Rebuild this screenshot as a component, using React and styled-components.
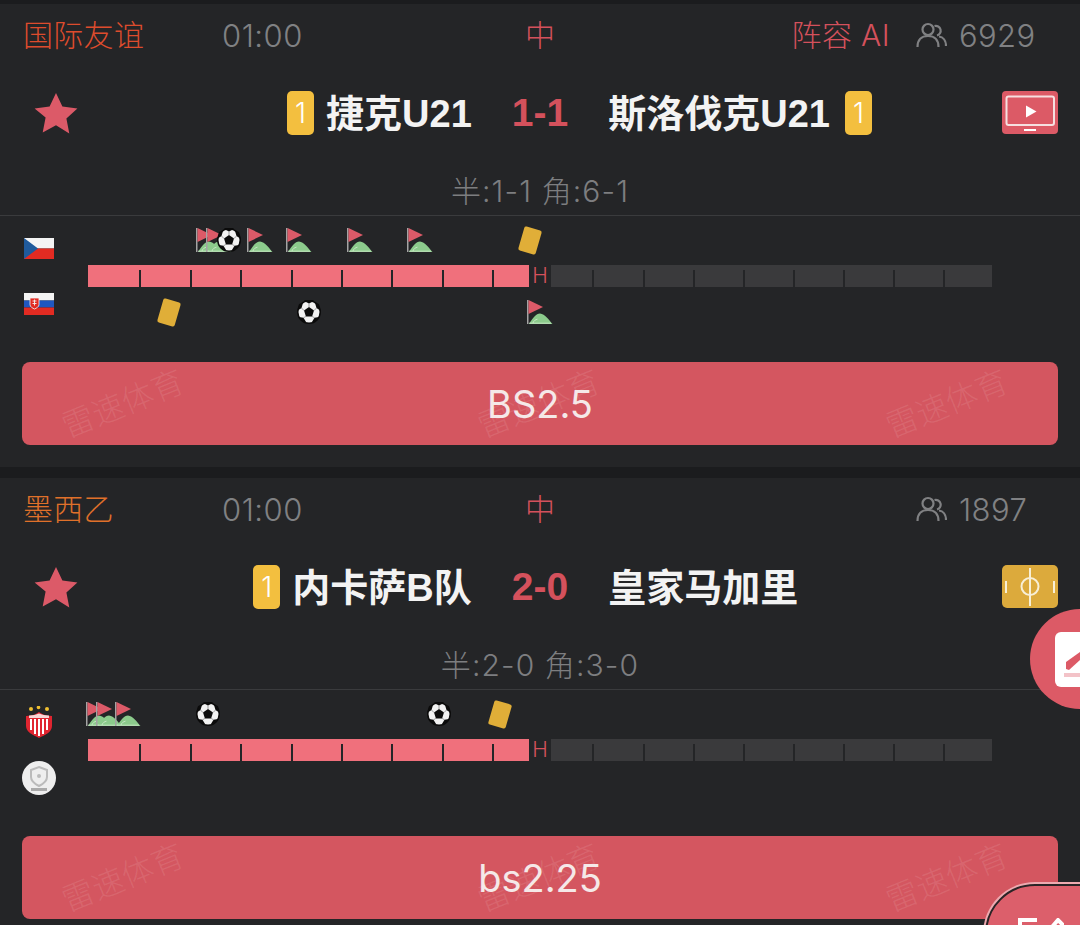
import React from 'react';
import styled, { createGlobalStyle } from 'styled-components';

const GlobalStyle = createGlobalStyle`
  html, body {
    margin: 0;
    height: 100%;
    overflow: hidden;
    background: #1b1c1e;
  }
  #root {
    height: 100%;
  }
`;

const FONT = `Inter, "Noto Sans CJK SC", sans-serif`;
const BOLD_FONT = `"Liberation Sans", "Noto Sans CJK SC", sans-serif`;

const Page = styled.div`
  position: relative;
  height: 925px;
  overflow: hidden;
  padding-top: 4px;
  box-sizing: border-box;
  display: flex;
  flex-direction: column;
  gap: 11px;
  font-family: ${FONT};
`;

const Card = styled.section`
  background: #242527;
  flex: none;
`;

const TopRow = styled.div`
  height: 64px;
  display: grid;
  grid-template-columns: 1fr auto 1fr;
  align-items: center;
  font-size: 30px;
  font-weight: 300;
  color: #808183;
`;

const TopLeft = styled.div`
  display: flex;
  align-items: center;
  padding-left: 23px;
`;

const League = styled.span`
  width: 199px;
  margin-top: -6px;
  letter-spacing: 0.3px;
  color: ${(p) => p.$color};
`;

const Time = styled.span`
  margin-top: -2px;
  font-size: 31px;
  letter-spacing: 0.5px;
`;

const Status = styled.span`
  margin-top: -6px;
  color: #d4515c;
`;

const TopRight = styled.div`
  display: flex;
  align-items: center;
  justify-content: flex-end;
`;

const Lineup = styled.span`
  margin: -6px 26px 0 0;
  letter-spacing: 0.4px;
  color: #d4515c;
`;

const Viewers = styled.div`
  width: 164px;
  margin-top: -2px;
  display: flex;
  align-items: center;
  gap: 12px;
  font-size: 31px;
  letter-spacing: 0.4px;
`;

const TeamRow = styled.div`
  height: 90px;
  padding: 0 22px;
  display: grid;
  grid-template-columns: 1fr auto 1fr;
  column-gap: 40px;
  align-items: center;
`;

const Side = styled.div`
  display: flex;
  align-items: center;
`;

const StarSlot = styled.div`
  margin: 0 auto 0 12px;
  display: flex;
`;

const IconSlot = styled.div`
  margin-left: auto;
  display: flex;
`;

const TeamName = styled.span`
  margin-top: -6px;
  font-family: ${BOLD_FONT};
  font-size: 38px;
  font-weight: 700;
  color: #f3f3f3;
  white-space: nowrap;
`;

const RedCount = styled.span`
  width: 27px;
  height: 44px;
  border-radius: 5px;
  background: #f3bf3f;
  color: #fff;
  font-size: 28px;
  font-weight: 300;
  display: flex;
  align-items: center;
  justify-content: center;
  margin: ${(p) => (p.$away ? '0 0 0 15px' : '0 12px 0 0')};
`;

const Score = styled.span`
  font-family: ${BOLD_FONT};
  font-size: 39px;
  font-weight: 700;
  color: #d4515c;
`;

const HalfRow = styled.div`
  margin-top: 7px;
  height: 47px;
  padding-bottom: 3px;
  border-bottom: 1px solid #3a3b3d;
  display: flex;
  align-items: center;
  justify-content: center;
  font-size: 30px;
  font-weight: 300;
  letter-spacing: 1.1px;
  color: #7d7e80;
`;

const EventRow = styled.div`
  position: relative;
  height: ${(p) => p.$height}px;
  padding-top: ${(p) => p.$top}px;
  box-sizing: border-box;
`;

const TeamSlot = styled.div`
  width: 58px;
  margin-left: 10px;
  display: flex;
  justify-content: center;
`;

const Pin = styled.div`
  position: absolute;
  left: ${(p) => p.$x}px;
  top: ${(p) => p.$y}px;
  display: flex;
`;

const YellowCard = styled.div`
  width: 18px;
  height: 25px;
  border-radius: 2px;
  background: #e0ae38;
  transform: rotate(16deg);
`;

const Bar = styled.div`
  display: flex;
  height: 22px;
  padding-left: 88px;
`;

const BarPart = styled.div`
  position: relative;
  width: 441px;
  background: ${(p) => p.$color};
`;

const Tick = styled.i`
  position: absolute;
  left: ${(p) => p.$x}px;
  bottom: 0;
  width: 2.5px;
  height: 17px;
  background: #242527;
`;

const HalfMark = styled.span`
  width: 22px;
  color: #d4515c;
  font-size: 21px;
  font-weight: 300;
  line-height: 22px;
  text-align: center;
`;

const TipButton = styled.div`
  position: relative;
  height: 83px;
  margin: 0 22px 22px;
  border-radius: 8px;
  background: #d45660;
  color: #f5e8e8;
  font-size: 38px;
  display: flex;
  align-items: center;
  justify-content: center;
`;

const Watermark = styled.span`
  position: absolute;
  left: ${(p) => p.$x}px;
  top: 26px;
  font-size: 32px;
  line-height: 1;
  font-weight: 300;
  white-space: nowrap;
  color: rgba(255, 255, 255, 0.1);
  transform: rotate(-22deg);
`;

const FloatEdit = styled.div`
  position: absolute;
  left: 1030px;
  top: 609px;
  width: 100px;
  height: 100px;
  border-radius: 50%;
  background: #dc5a66;
`;

const EditPaper = styled.div`
  position: absolute;
  left: 25px;
  top: 23px;
  width: 60px;
  height: 55px;
  border-radius: 6px;
  background: #fff;
  overflow: hidden;
`;

const FloatMenu = styled.div`
  position: absolute;
  left: 985px;
  top: 884px;
  width: 160px;
  height: 100px;
  box-sizing: border-box;
  border-radius: 50px;
  background: #dc5f6b;
  border: 2px solid #2a2426;
  box-shadow: 0 0 0 2px #eeaab0;
`;

const MenuIcon = styled.div`
  position: absolute;
  left: 31px;
  top: 32px;
  display: flex;
`;

function Star() {
  return (
    <svg width="44" height="42" viewBox="0 0 44 42">
      <path d="M22 1l6.4 13.6 15 1.8-11 10.2 2.9 14.8L22 33.2 8.7 40.4l2.9-14.8L.6 16.4l15-1.8z" fill="#dc5a68" />
    </svg>
  );
}

function People() {
  return (
    <svg width="31" height="26" viewBox="0 0 31 26" fill="none" stroke="#808183" strokeWidth="2.2">
      <circle cx="12" cy="7.5" r="5.5" />
      <path d="M1.5 25c0-7 4-11 10.5-11s10.500 4 10.500 11" />
      <path d="M18.5 4a4.8 4.8 0 1 1 2.5 9.5" />
      <path d="M23 14.5c4 .5 7 4 7 9.5" />
    </svg>
  );
}

function TvIcon() {
  return (
    <svg width="56" height="44" viewBox="0 0 56 44">
      <rect width="56" height="43" rx="4" fill="#dc5a66" />
      <rect x="4.5" y="5.5" width="47.5" height="28.5" rx="2" fill="none" stroke="#f6dfe0" strokeWidth="2" />
      <path d="M24 14.5l10.5 6-10.5 6z" fill="#fff" />
      <rect x="22" y="38" width="12" height="2" fill="#fff" />
    </svg>
  );
}

function PitchIcon() {
  return (
    <svg width="56" height="44" viewBox="0 0 56 44">
      <rect width="56" height="43" rx="5" fill="#dcaa3c" />
      <g fill="none" stroke="#f8efd6" strokeWidth="2">
        <path d="M28 3v38" />
        <circle cx="28" cy="21.5" r="8.5" />
        <path d="M4 16v12M52 16v12" />
      </g>
    </svg>
  );
}

function Ball() {
  return (
    <svg width="24" height="24" viewBox="0 0 24 24">
      <circle cx="12" cy="12" r="12" fill="#0b0b0b" />
      <circle cx="12" cy="12" r="10.5" fill="#f2f2f2" />
      <path d="M12 7l5 3.6-1.900 5.800H8.900L7 10.600z" fill="#0b0b0b" />
      <path d="M7 1l5 2.500L17 1l-1-1H8zM.8 10.500L4.500 8 6 3 2 4zM23.200 10.500L19.500 8 18 3l4 1zM1.800 17l4.700.8 3 5-4-.8zM22.200 17l-4.700.8-3 5 4-.8z" fill="#0b0b0b" />
      <path d="M12 7V3.500M17 10.600l2.500-2.600M7 10.600L4.500 8M15.100 16.400l2.400 1.400M8.900 16.400l-2.400 1.400" stroke="#777" strokeWidth=".7" />
    </svg>
  );
}

function CornerFlag() {
  return (
    <svg width="26" height="24" viewBox="0 0 26 24">
      <path d="M2 24C6 18 9 13.5 13 13.5c5 .5 9 6.5 12.5 10.5z" fill="#8ccb8c" />
      <path d="M2 23.2h22M6 23c.5-2 2.5-3.500 4.500-3.800" fill="none" stroke="#dcefd9" strokeWidth=".7" />
      <rect x="0" y="0" width="1.5" height="24" fill="#a4a4a4" />
      <path d="M1.5 0L16 7 1.5 14z" fill="#dc5a68" />
    </svg>
  );
}

function CzechFlag() {
  return (
    <svg width="30" height="21" viewBox="0 0 30 21">
      <rect width="30" height="10.5" fill="#f4f4f4" />
      <rect y="10.5" width="30" height="10.5" fill="#e22b22" />
      <path d="M0 0l14 10.5L0 21z" fill="#1f5a9c" />
    </svg>
  );
}

function SlovakFlag() {
  return (
    <svg width="30" height="22" viewBox="0 0 30 22">
      <rect width="30" height="7.5" fill="#f4f4f4" />
      <rect y="7.5" width="30" height="7" fill="#1f57c0" />
      <rect y="14.5" width="30" height="7.5" fill="#e22b22" />
      <path d="M6 5h9v6.5c0 2.500-2.500 3.500-4.500 4.500C8.500 15 6 14 6 11.500z" fill="#e22b22" stroke="#f4f4f4" strokeWidth=".8" />
      <path d="M10.500 6.500v6M8.500 8h4M8.500 10.500h4" stroke="#f4f4f4" strokeWidth=".9" />
    </svg>
  );
}

function NecaxaCrest() {
  return (
    <svg width="26" height="32" viewBox="0 0 26 32">
      <g fill="#f0c030">
        <circle cx="5" cy="3" r="2" />
        <circle cx="12.5" cy="1.5" r="1.8" />
        <circle cx="21" cy="3" r="2" />
      </g>
      <path d="M0 10c4 0 9-1 13-4 4 3 9 4 13 4v10c0 6-7 9-13 12C7 29 0 26 0 20z" fill="#e02530" />
      <path d="M3 9.5c4 0 7-1 10-2 3 1 6 2 10 2V12H3z" fill="#f7d7d7" />
      <path d="M5 13v11M9 13v15M13 13v17M17 13v15M21 13v11" stroke="#fff" strokeWidth="2" />
    </svg>
  );
}

function EmptyTeam() {
  return (
    <svg width="34" height="34" viewBox="0 0 34 34">
      <circle cx="17" cy="17" r="17" fill="#eeeeee" />
      <path d="M17 6l8 3v7c0 4-4 7-8 9-4-2-8-5-8-9V9z" fill="none" stroke="#bbb" strokeWidth="2" />
      <circle cx="17" cy="15" r="2" fill="#bbb" />
      <rect x="9" y="27" width="16" height="3" fill="#aaa" />
    </svg>
  );
}

const matches = [
  {
    league: '国际友谊',
    leagueColor: '#dd4c2d',
    lineup: true,
    viewers: '6929',
    home: '捷克U21',
    away: '斯洛伐克U21',
    homeCount: 1,
    awayCount: 1,
    score: '1-1',
    half: '半:1-1 角:6-1',
    icon: <TvIcon />,
    homeBadge: <CzechFlag />,
    awayBadge: <SlovakFlag />,
    homeTop: 22,
    awayTop: 6,
    homeEvents: [
      ['flag', 196], ['flag', 206], ['ball', 217], ['flag', 247], ['flag', 286],
      ['flag', 347], ['flag', 407], ['card', 521],
    ],
    awayEvents: [['card', 160], ['ball', 297], ['flag', 527]],
    tip: 'BS2.5',
  },
  {
    league: '墨西乙',
    leagueColor: '#e0712a',
    lineup: false,
    viewers: '1897',
    home: '内卡萨B队',
    away: '皇家马加里',
    homeCount: 1,
    awayCount: 0,
    score: '2-0',
    half: '半:2-0 角:3-0',
    icon: <PitchIcon />,
    homeBadge: <NecaxaCrest />,
    awayBadge: <EmptyTeam />,
    homeTop: 16,
    awayTop: 0,
    homeEvents: [
      ['flag', 86], ['flag', 96], ['flag', 115], ['ball', 196], ['ball', 427], ['card', 491],
    ],
    awayEvents: [],
    tip: 'bs2.25',
  },
];

const playedTicks = [50.5, 101.5, 151.5, 202.5, 252.5, 302.5, 353.5, 403.5];
const restTicks = [40.5, 91.5, 141.5, 191.5, 241.5, 291.5, 341.5, 391.5];

function EventPin({ kind, x, y }) {
  if (kind === 'ball') return <Pin $x={x} $y={y}><Ball /></Pin>;
  if (kind === 'flag') return <Pin $x={x} $y={y}><CornerFlag /></Pin>;
  return <Pin $x={x} $y={y}><YellowCard /></Pin>;
}

function Match({ m }) {
  return (
    <Card>
      <TopRow>
        <TopLeft>
          <League $color={m.leagueColor}>{m.league}</League>
          <Time>01:00</Time>
        </TopLeft>
        <Status>中</Status>
        <TopRight>
          {m.lineup && <Lineup>阵容 AI</Lineup>}
          <Viewers>
            <People />
            {m.viewers}
          </Viewers>
        </TopRight>
      </TopRow>
      <TeamRow>
        <Side>
          <StarSlot><Star /></StarSlot>
          {m.homeCount > 0 && <RedCount>{m.homeCount}</RedCount>}
          <TeamName>{m.home}</TeamName>
        </Side>
        <Score>{m.score}</Score>
        <Side>
          <TeamName>{m.away}</TeamName>
          {m.awayCount > 0 && <RedCount $away>{m.awayCount}</RedCount>}
          <IconSlot>{m.icon}</IconSlot>
        </Side>
      </TeamRow>
      <HalfRow>{m.half}</HalfRow>
      <EventRow $height={49} $top={m.homeTop}>
        <TeamSlot>{m.homeBadge}</TeamSlot>
        {m.homeEvents.map(([kind, x]) => <EventPin key={kind + x} kind={kind} x={x} y={12} />)}
      </EventRow>
      <Bar>
        <BarPart $color="#f0707c">
          {playedTicks.map((x) => <Tick key={x} $x={x} />)}
        </BarPart>
        <HalfMark>H</HalfMark>
        <BarPart $color="#3a3a3c">
          {restTicks.map((x) => <Tick key={x} $x={x} />)}
        </BarPart>
      </Bar>
      <EventRow $height={75} $top={m.awayTop}>
        <TeamSlot>{m.awayBadge}</TeamSlot>
        {m.awayEvents.map(([kind, x]) => <EventPin key={kind + x} kind={kind} x={x} y={13} />)}
      </EventRow>
      <TipButton>
        {m.tip}
        <Watermark $x={37}>雷速体育</Watermark>
        <Watermark $x={453}>雷速体育</Watermark>
        <Watermark $x={861}>雷速体育</Watermark>
      </TipButton>
    </Card>
  );
}

export default function App() {
  return (
    <Page>
      <GlobalStyle />
      {matches.map((m) => <Match key={m.league} m={m} />)}
      <FloatEdit>
        <EditPaper>
          <svg width="60" height="55" viewBox="0 0 60 55">
            <path d="M11 37v-7l14-10v8L14 38z" fill="#dc5a66" />
            <rect x="9" y="41" width="51" height="4" fill="#f3c3c8" />
          </svg>
        </EditPaper>
      </FloatEdit>
      <FloatMenu>
        <MenuIcon>
          <svg width="46" height="24" viewBox="0 0 46 24" fill="none" stroke="#fff" strokeWidth="4">
            <path d="M2 24V2h17M28 16L40 2l6 6" />
          </svg>
        </MenuIcon>
      </FloatMenu>
    </Page>
  );
}
